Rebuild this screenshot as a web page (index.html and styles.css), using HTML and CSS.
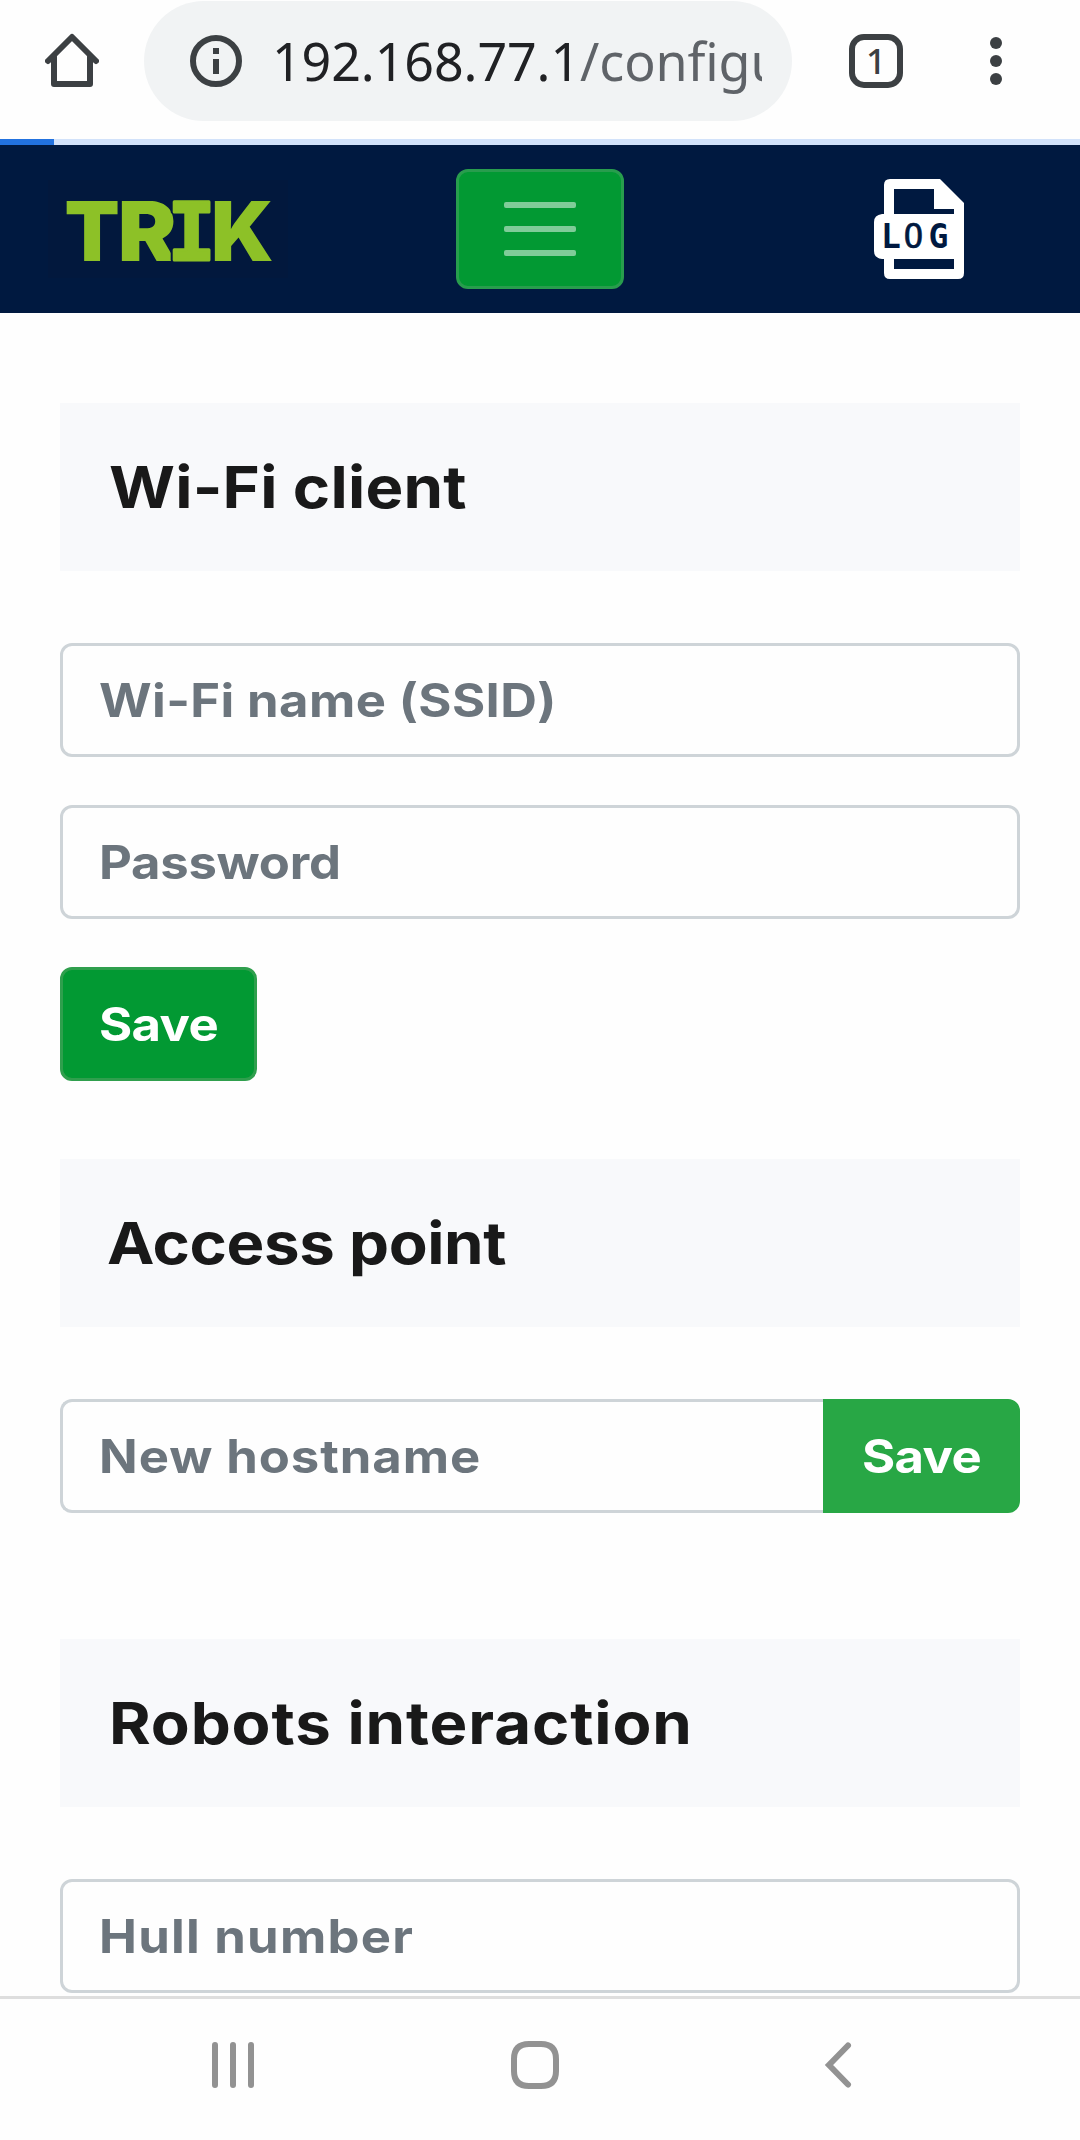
FILE: index.html
```
<!DOCTYPE html>
<html lang="en">
<head>
<meta charset="utf-8">
<title>TRIK configuration</title>
<link rel="stylesheet" href="styles.css">
</head>
<body>
<div class="screen">
  <header class="browser-bar">
    <svg class="home" width="54" height="56" viewBox="0 0 54 56" fill="none" stroke="#3c4043" stroke-width="6" stroke-linejoin="round" stroke-linecap="round"><path d="M3 28 27 4 51 28"/><path d="M9 24V51H45V24"/></svg>
    <div class="omnibox">
      <svg class="info" width="52" height="52" viewBox="0 0 52 52"><circle cx="26" cy="26" r="23" fill="none" stroke="#3c4043" stroke-width="6"/><path d="M23 13h6v6h-6zM23 24h6v15h-6z" fill="#3c4043"/></svg>
      <div class="url"><span class="host">192.168.77.1</span><span class="path">/configu</span></div>
    </div>
    <div class="tabs">1</div>
    <svg class="more" width="12" height="48" viewBox="0 0 12 48" fill="#3c4043"><circle cx="6" cy="6" r="6"/><circle cx="6" cy="24" r="6"/><circle cx="6" cy="42" r="6"/></svg>
  </header>
  <div class="progress"><div class="progress-value"></div></div>

  <nav class="navbar">
    <svg class="brand" width="240" height="98" viewBox="0 0 240 98">
      <g class="brand-text">
        <text transform="translate(16.5 81.2) scale(.975 1)">T</text>
        <text transform="translate(69.8 81.2) scale(1.07 1)">R</text>
        <text class="brand-slab" transform="translate(119.600 80)">I</text>
        <text transform="translate(163 81.2)">K</text>
      </g>
    </svg>
    <button class="toggler" aria-label="Menu"><i></i><i></i><i></i></button>
    <svg class="log" width="90" height="100" viewBox="0 0 90 100">
      <path fill="#fff" fill-rule="evenodd" d="M16 0H66L90 24V94Q90 100 84 100H16Q10 100 10 94V80H8Q0 79 0 72V43Q0 36 8 35H10V6Q10 0 16 0ZM20 10V35H80V30H60V10ZM20 80V90H80V80Z"/>
      <g class="log-text"><text x="7" y="69">L</text><text class="light" x="29.6" y="69">O</text><text x="54.600" y="69">G</text></g>
    </svg>
  </nav>

  <main class="content">
    <section class="wifi">
      <h2 class="title"><span class="label client">Wi-Fi client</span></h2>
      <div class="fields">
        <div class="field" role="textbox" tabindex="0"><span class="label ssid">Wi-Fi name (SSID)</span></div>
        <div class="field" role="textbox" tabindex="0"><span class="label password">Password</span></div>
        <button class="save"><span class="label">Save</span></button>
      </div>
    </section>
    <section class="access">
      <h2 class="title"><span class="label point">Access point</span></h2>
      <div class="group">
        <div class="field" role="textbox" tabindex="0"><span class="label hostname">New hostname</span></div>
        <button class="save append"><span class="label">Save</span></button>
      </div>
    </section>
    <section class="robots">
      <h2 class="title"><span class="label interaction">Robots interaction</span></h2>
      <div class="fields">
        <div class="field" role="textbox" tabindex="0"><span class="label hull">Hull number</span></div>
      </div>
    </section>
  </main>

  <footer class="system-bar">
    <svg width="42" height="48" viewBox="0 0 42 48" stroke="#929292" stroke-width="6" stroke-linecap="round"><path d="M3 4V44M21 4V44M39 4V44"/></svg>
    <svg class="nav-home" width="48" height="48" viewBox="0 0 48 48" fill="none" stroke="#929292" stroke-width="6"><path d="M18 3H30Q45 3 45 18V30Q45 45 30 45H18Q3 45 3 30V18Q3 3 18 3Z"/></svg>
    <svg class="nav-back" width="28" height="48" viewBox="0 0 28 48" fill="none" stroke="#929292" stroke-width="6" stroke-linecap="round"><path d="M24 4.500 5 24 24 43.500"/></svg>
  </footer>
</div>
</body>
</html>
```
FILE: styles.css
```
* { box-sizing: border-box; }

body {
  margin: 0;
  background: #fefefe;
  font-family: Inter, "Liberation Sans", sans-serif;
}

svg { display: block; flex: none; }

.screen {
  width: 1080px;
  height: 2140px;
  overflow: hidden;
  display: flex;
  flex-direction: column;
}

.browser-bar {
  height: 139px;
  flex: none;
  padding: 1px 78px 18px 45px;
  display: flex;
  align-items: center;
}

.omnibox {
  width: 648px;
  height: 120px;
  margin-left: 45px;
  padding: 0 30px 0 46px;
  border-radius: 60px;
  background: #f1f3f4;
  display: flex;
  align-items: center;
}

.url {
  flex: 1;
  min-width: 0;
  margin-left: 30px;
  overflow: hidden;
  white-space: nowrap;
  font: 400 52px/76px "Noto Sans", sans-serif;
  letter-spacing: -.12px;
}

.host { color: #202124; }
.path { color: #5f6368; }

.tabs {
  width: 54px;
  height: 54px;
  margin-left: 57px;
  border: 6px solid #3c4043;
  border-radius: 15px;
  color: #3c4043;
  font: 500 35px/41px "Noto Sans", sans-serif;
  text-align: center;
}

.more { margin-left: 87px; }

.progress {
  height: 6px;
  flex: none;
  background: #d2e2fa;
}

.progress-value {
  width: 54px;
  height: 6px;
  background: #2272df;
}

.navbar {
  height: 168px;
  flex: none;
  padding: 0 116px 0 48px;
  background: #001940;
  display: flex;
  align-items: center;
}

.brand { background: #02183d; }

.brand-text {
  fill: #8dc127;
  font: 900 82.500px Inter, sans-serif;
}

.brand-slab {
  font: 700 80px "DejaVu Sans Mono", monospace;
  stroke: #8dc127;
  stroke-width: 3px;
  stroke-linejoin: round;
  filter: drop-shadow(-2px 0 0 #02183d);
}

.toggler {
  width: 168px;
  height: 120px;
  margin-left: 168px;
  padding: 0;
  border: 3px solid #289d4d;
  border-radius: 12px;
  background: #029933;
  display: flex;
  flex-direction: column;
  align-items: center;
  justify-content: center;
  gap: 18px;
}

.toggler i {
  width: 72px;
  height: 6px;
  border-radius: 2px;
  background: #80cc99;
}

.log { margin-left: auto; }

.log-text {
  fill: #001940;
  font: 700 33px "DejaVu Sans Mono", monospace;
}

.log-text .light { font-weight: 400; stroke: #001940; stroke-width: .6px; }

.content {
  height: 1683px;
  flex: none;
  padding: 90px 60px 0;
  overflow: hidden;
  display: flex;
  flex-direction: column;
}

.wifi { margin-bottom: 78px; }
.access { margin-bottom: 126px; }

.title {
  height: 168px;
  margin: 0 0 72px;
  padding-left: 49px;
  background: #f8f9fb;
  color: #191919;
  font-size: 57.800px;
  font-weight: 700;
  line-height: 168px;
}

.label {
  display: inline-block;
  white-space: nowrap;
  transform: scaleX(1.1);
  transform-origin: 0 50%;
}

.client { letter-spacing: .2px; }
.point { margin-left: -2px; letter-spacing: -.38px; }
.interaction { letter-spacing: .78px; }
.ssid { letter-spacing: .34px; }
.password { letter-spacing: -.24px; }
.hostname { letter-spacing: .84px; }
.hull { letter-spacing: 1.100px; }

.fields {
  display: flex;
  flex-direction: column;
  align-items: flex-start;
  gap: 48px;
}

.field {
  width: 100%;
  height: 114px;
  padding: 0 36px;
  border: 3px solid #ced4d8;
  border-radius: 12px;
  background: #fefefe;
  color: #6c757d;
  font-size: 46.200px;
  font-weight: 700;
  line-height: 108px;
}

.save {
  width: 197px;
  height: 114px;
  flex: none;
  padding: 0 0 0 36px;
  border: 3px solid #2f9f4d;
  border-radius: 12px;
  background: #029933;
  color: #fff;
  font: 700 46.200px/108px Inter, sans-serif;
  letter-spacing: -.6px;
  text-align: left;
}

.group { display: flex; }

.group .field {
  flex: 1;
  min-width: 0;
  border-right: 0;
  border-radius: 12px 0 0 12px;
}

.append {
  border-color: #28a745;
  border-radius: 0 12px 12px 0;
  background: #28a745;
}

.system-bar {
  flex: 1;
  padding: 0 228px 9px 212px;
  border-top: 3px solid #dedede;
  background: #fefefe;
  display: flex;
  align-items: center;
}

.nav-home { margin-left: 257px; }
.nav-back { margin-left: auto; }
```
